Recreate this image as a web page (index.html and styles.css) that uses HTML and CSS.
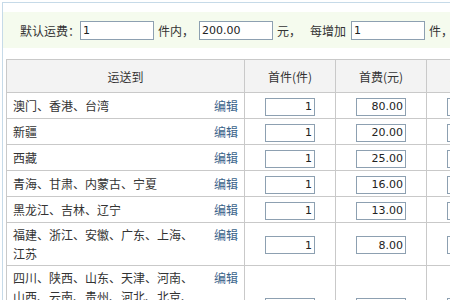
FILE: index.html
```html
<!DOCTYPE html>
<html lang="zh-CN">
<head>
  <meta charset="UTF-8">
  <title>运费模板</title>
  <link rel="stylesheet" href="styles.css">
</head>
<body>
  <div class="panel">
    <!-- 默认运费 -->
    <div class="default-fee">
      <span class="label">默认运费：</span>
      <input type="text" class="fee-input" value="1">
      <span class="word">件内，</span>
      <input type="text" class="fee-input" value="200.00">
      <span class="word">元，</span>
      <span class="word">每增加</span>
      <input type="text" class="fee-input" value="1">
      <span class="word">件，</span>
    </div>

    <!-- 指定地区运费 -->
    <table class="area-table">
      <colgroup>
        <col class="col-area">
        <col class="col-num">
        <col class="col-num">
        <col class="col-num">
      </colgroup>
      <thead>
        <tr>
          <th>运送到</th>
          <th>首件(件)</th>
          <th>首费(元)</th>
          <th>续件(件)</th>
        </tr>
      </thead>
      <tbody>
        <tr>
          <td><div class="area"><span class="area-name">澳门、香港、台湾</span><a href="#" class="edit">编辑</a></div></td>
          <td><input type="text" class="cell-input" value="1"></td>
          <td><input type="text" class="cell-input" value="80.00"></td>
          <td><input type="text" class="cell-input" value="1"></td>
        </tr>
        <tr>
          <td><div class="area"><span class="area-name">新疆</span><a href="#" class="edit">编辑</a></div></td>
          <td><input type="text" class="cell-input" value="1"></td>
          <td><input type="text" class="cell-input" value="20.00"></td>
          <td><input type="text" class="cell-input" value="1"></td>
        </tr>
        <tr>
          <td><div class="area"><span class="area-name">西藏</span><a href="#" class="edit">编辑</a></div></td>
          <td><input type="text" class="cell-input" value="1"></td>
          <td><input type="text" class="cell-input" value="25.00"></td>
          <td><input type="text" class="cell-input" value="1"></td>
        </tr>
        <tr>
          <td><div class="area"><span class="area-name">青海、甘肃、内蒙古、宁夏</span><a href="#" class="edit">编辑</a></div></td>
          <td><input type="text" class="cell-input" value="1"></td>
          <td><input type="text" class="cell-input" value="16.00"></td>
          <td><input type="text" class="cell-input" value="1"></td>
        </tr>
        <tr>
          <td><div class="area"><span class="area-name">黑龙江、吉林、辽宁</span><a href="#" class="edit">编辑</a></div></td>
          <td><input type="text" class="cell-input" value="1"></td>
          <td><input type="text" class="cell-input" value="13.00"></td>
          <td><input type="text" class="cell-input" value="1"></td>
        </tr>
        <tr>
          <td><div class="area"><span class="area-name">福建、浙江、安徽、广东、上海、江苏</span><a href="#" class="edit">编辑</a></div></td>
          <td><input type="text" class="cell-input" value="1"></td>
          <td><input type="text" class="cell-input" value="8.00"></td>
          <td><input type="text" class="cell-input" value="1"></td>
        </tr>
        <tr>
          <td><div class="area"><span class="area-name">四川、陕西、山东、天津、河南、山西、云南、贵州、河北、北京、湖南、湖北、江西、重庆、广西、海南</span><a href="#" class="edit">编辑</a></div></td>
          <td><input type="text" class="cell-input" value="1"></td>
          <td><input type="text" class="cell-input" value="10.00"></td>
          <td><input type="text" class="cell-input" value="1"></td>
        </tr>
      </tbody>
    </table>
  </div>
</body>
</html>
```

FILE: styles.css
```css
body {
  margin: 0;
  font-family: "Noto Sans CJK SC", "Noto Sans", sans-serif;
  font-size: 12px;
  color: #333;
  background: #fff;
  overflow: hidden;
}

.panel {
  width: 600px;
  margin: 2px 0 0 2px;
  padding-top: 9px;
  border-top: 1px solid #c6dae8;
  border-left: 1px solid #c6dae8;
}

/* top band */
.default-fee {
  display: flex;
  align-items: center;
  height: 36px;
  padding-left: 17px;
  background-color: #f5fbee;
  white-space: nowrap;
}

.default-fee .word {
  margin: 0 5px 0 4px;
}

.fee-input {
  box-sizing: border-box;
  width: 74px;
  height: 19px;
  padding: 0 2px;
  border: 1px solid #8da0b1;
  font-family: "DejaVu Sans", sans-serif;
  font-size: 11px;
  color: #222;
  background: #fff;
}

/* table */
.area-table {
  margin: 11px 0 0 3px;
  border-collapse: collapse;
  table-layout: fixed;
  width: 511px;
}

.col-area {
  width: 238px;
}

.col-num {
  width: 91px;
}

.area-table th,
.area-table td {
  border: 1px solid #c9c9c9;
}

.area-table th {
  height: 32px;
  padding: 0;
  font-weight: normal;
  background-color: #f3f3f3;
  color: #333;
  text-align: center;
}

.area-table td {
  height: 21px;
  padding: 2px 6px;
  line-height: 19px;
  text-align: center;
  vertical-align: middle;
}

.area {
  display: flex;
  align-items: flex-start;
  justify-content: space-between;
  text-align: left;
}

.area-name {
  width: 190px;
}

.edit {
  color: #3a638a;
  text-decoration: none;
}

.cell-input {
  box-sizing: border-box;
  width: 50px;
  height: 18px;
  padding: 0 2px;
  border: 1px solid #8da0b1;
  text-align: right;
  font-family: "DejaVu Sans", sans-serif;
  font-size: 11px;
  color: #222;
  vertical-align: middle;
}
```
